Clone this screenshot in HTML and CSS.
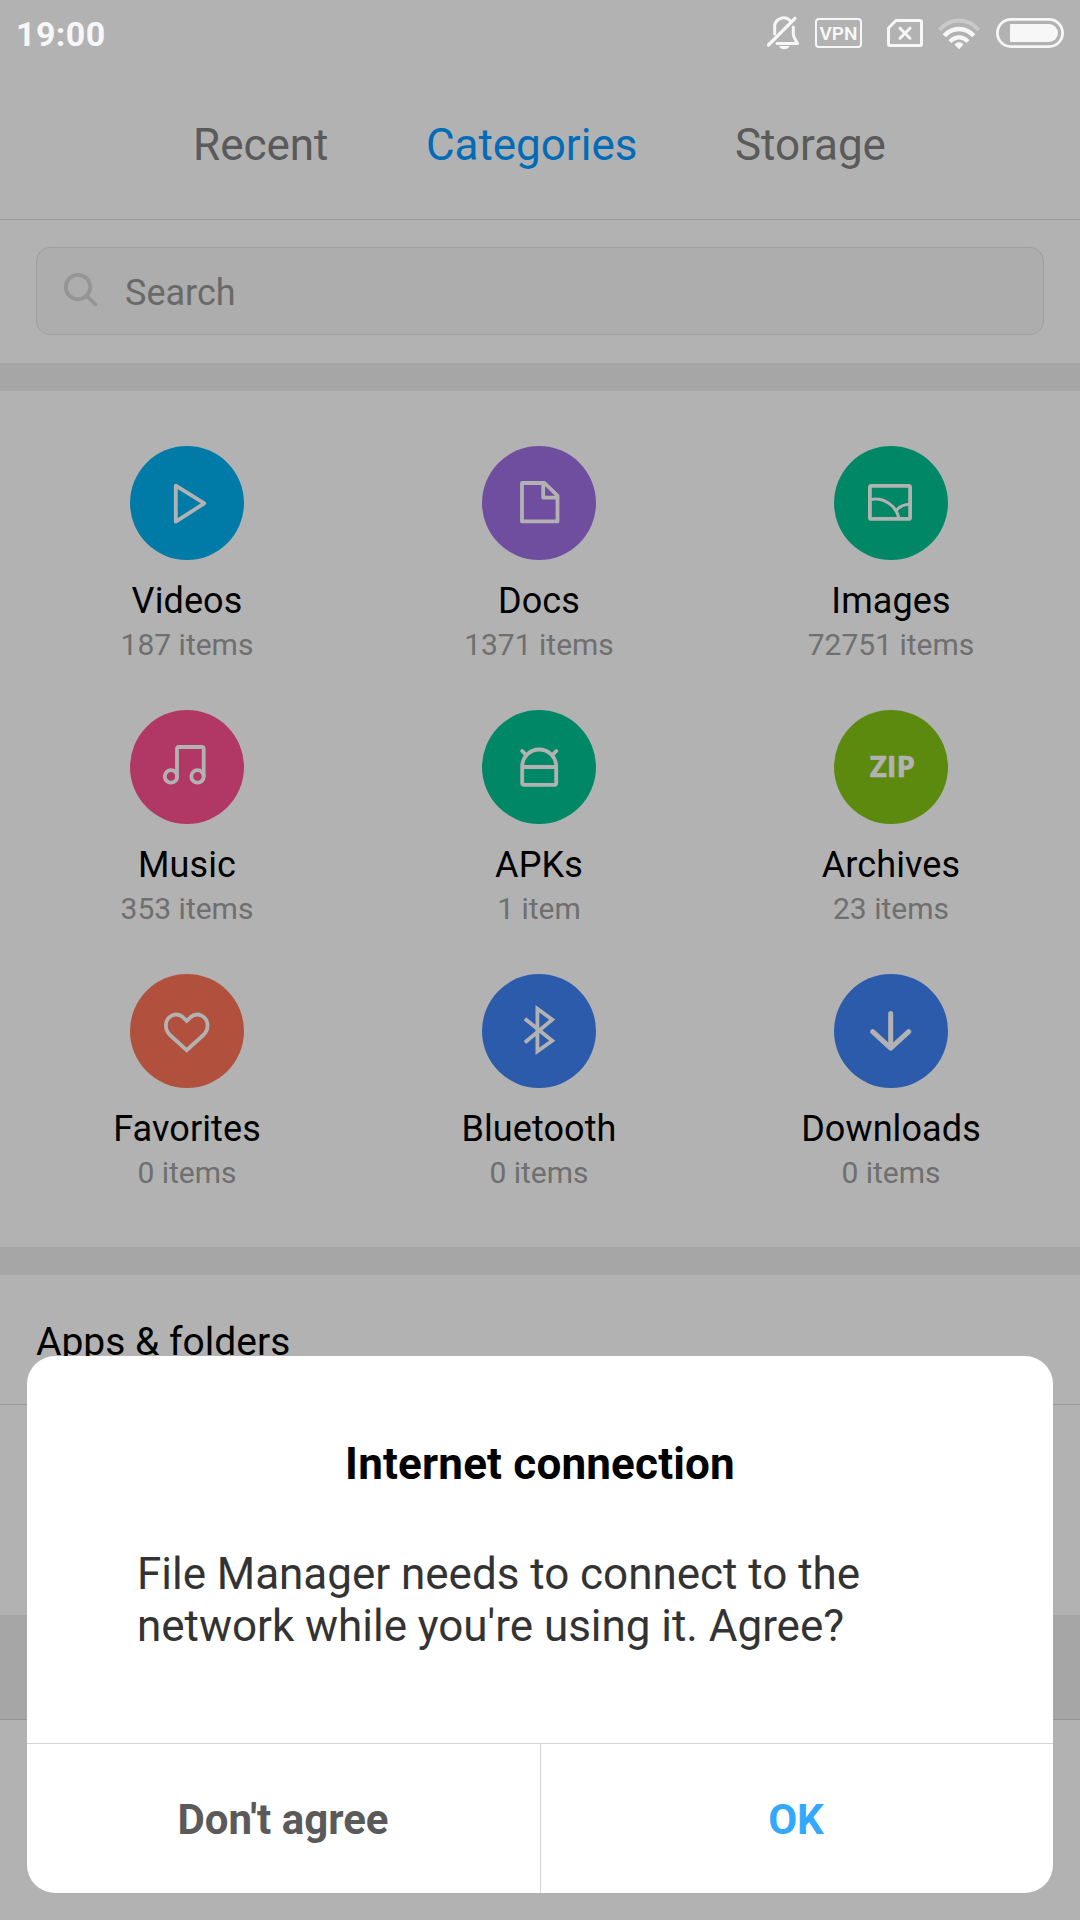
FILE: index.html
```html
<!DOCTYPE html>
<html lang="en">
<head>
<meta charset="utf-8">
<title>File Manager</title>
<link rel="stylesheet" href="styles.css">
</head>
<body>
<div class="screen">
  <header class="status-bar">
    <span class="clock">19:00</span>
    <div class="status-icons">
      <svg class="icon-bell" viewBox="766 16 35 34" width="35" height="34">
        <path d="M774.7 34V27.5A9 9 0 0 1 790.5 21M793.3 27V34Q793.5 37 795 39L797.5 43.4H777" stroke-width="3"/>
        <path d="M768.5 45L795 18.3" stroke-width="3.2"/>
        <path class="solid" d="M779 46H789.5Q788 49.2 784.3 49.2T779 46Z"/>
      </svg>
      <span class="vpn">VPN</span>
      <svg class="icon-sim" viewBox="886 18 38 30" width="38" height="30">
        <path d="M896 20.5H920Q921.5 20.5 921.5 22V44Q921.5 45.5 920 45.5H890Q888.5 45.5 888.5 44V28Z" stroke-width="3"/>
        <path d="M900 28.2L910 38.2M910 28.2L900 38.2" stroke-width="3"/>
      </svg>
      <svg class="icon-wifi" viewBox="937 17 44 33" width="44" height="33">
        <path class="faint" d="M939.3 30Q947.5 20.5 959 20.5T978.7 30" stroke-width="4"/>
        <path class="arc" d="M944.3 35.8Q950.3 29 959 29T973.7 35.8" stroke-width="4.4"/>
        <path class="arc" d="M950 41.6Q954 37.4 959 37.4T968 41.6" stroke-width="4.2"/>
        <path class="solid" d="M959 42.3Q963 42.3 963.2 45L959 49.2L954.8 45Q955 42.3 959 42.3Z"/>
      </svg>
      <svg class="icon-battery" viewBox="996 18 68 30" width="68" height="30">
        <rect x="997.4" y="19.4" width="65.2" height="27.2" rx="13.6" stroke-width="2.8"/>
        <path class="solid" d="M1011 24H1049A9 9 0 0 1 1049 42H1011Q1010 42 1010 41V25Q1010 24 1011 24Z"/>
      </svg>
    </div>
  </header>

  <nav class="tabs">
    <span class="tab">Recent</span>
    <span class="tab active">Categories</span>
    <span class="tab">Storage</span>
  </nav>

  <section class="search-area">
    <div class="search-box">
      <svg class="search-icon" viewBox="0 0 36 36" width="36" height="36">
        <circle cx="15" cy="15" r="12.2"/>
        <path d="M23.8 24L32.4 32.5"/>
      </svg>
      <span class="search-hint">Search</span>
    </div>
  </section>

  <main class="categories">
    <div class="category">
      <svg class="badge videos" viewBox="0 0 114 114"><path d="M45.8 39.7L74.3 57.3L45.8 75.6Z"/></svg>
      <span class="name">Videos</span><span class="count">187 items</span>
    </div>
    <div class="category">
      <svg class="badge docs" viewBox="0 0 114 114"><path d="M40 37H62.5L75.5 49.7V75.4H40ZM61.2 37V51.7H75.5"/></svg>
      <span class="name">Docs</span><span class="count">1371 items</span>
    </div>
    <div class="category">
      <svg class="badge images" viewBox="0 0 114 114"><rect x="35.9" y="39.9" width="40.2" height="33" rx="1.5"/><path class="thin" d="M37 53.4C50 51.5 62 59 65 72.5M62.7 64Q67.5 58.3 76 58.2"/></svg>
      <span class="name">Images</span><span class="count">72751 items</span>
    </div>
    <div class="category">
      <svg class="badge music" viewBox="0 0 114 114"><circle cx="41" cy="66.4" r="6.2"/><circle cx="67.5" cy="66.4" r="6.2"/><path d="M47 66.4V39Q47 37 49 37H71.7Q73.7 37 73.7 39V66.4"/></svg>
      <span class="name">Music</span><span class="count">353 items</span>
    </div>
    <div class="category">
      <svg class="badge apks" viewBox="0 0 114 114"><path d="M40.2 56.5A17 17 0 0 1 74.2 56.5V73Q74.2 74.8 72.4 74.8H42Q40.2 74.8 40.2 73ZM40.2 57H74.2M40.2 41L44 44.8M74.3 41L70.5 44.8"/></svg>
      <span class="name">APKs</span><span class="count">1 item</span>
    </div>
    <div class="category">
      <svg class="badge archives" viewBox="0 0 114 114"><text class="zip" x="35.7" y="67.3" textLength="45.4" lengthAdjust="spacingAndGlyphs">ZIP</text></svg>
      <span class="name">Archives</span><span class="count">23 items</span>
    </div>
    <div class="category">
      <svg class="badge favorites" viewBox="0 0 114 114"><path class="sharp" d="M56.7 46.8L53 43.3C46 37.3 35.9 42 35.9 51.8C35.9 56 37.5 58.6 40 61L56.7 76.2L73.4 61C75.9 58.6 77.5 56 77.5 51.8C77.5 42 67.4 37.3 60.4 43.3Z"/></svg>
      <span class="name">Favorites</span><span class="count">0 items</span>
    </div>
    <div class="category">
      <svg class="badge bluetooth" viewBox="0 0 114 114"><path class="sharp" d="M42.9 44.8L70.2 66.7L55.4 77.4V34.8L70.2 45.6L42.9 68.5"/></svg>
      <span class="name">Bluetooth</span><span class="count">0 items</span>
    </div>
    <div class="category">
      <svg class="badge downloads" viewBox="0 0 114 114"><path class="thick" d="M56.7 39.5V74M38.7 57.6L56.7 74.2L74.7 57.6"/></svg>
      <span class="name">Downloads</span><span class="count">0 items</span>
    </div>
  </main>

  <section class="apps">
    <h2 class="apps-title">Apps &amp; folders</h2>
    <div class="apps-body"></div>
  </section>
  <div class="footer-band"></div>

  <div class="dialog">
    <h1 class="dialog-title">Internet connection</h1>
    <p class="dialog-text">File Manager needs to connect to the network while you're using it. Agree?</p>
    <div class="dialog-actions">
      <span class="action decline">Don't agree</span>
      <span class="action accept">OK</span>
    </div>
  </div>
</div>
</body>
</html>
```
FILE: styles.css
```css
* { box-sizing: border-box; }

body {
  margin: 0;
  background: #b2b2b2;
  font-family: Roboto, "Liberation Sans", sans-serif;
}

.screen {
  position: relative;
  display: flex;
  flex-direction: column;
  width: 1080px;
  height: 1920px;
  overflow: hidden;
  background: #b2b2b2;
}

/* Status bar */
.status-bar {
  display: flex;
  justify-content: space-between;
  height: 70px;
  padding: 0 16px 0 16px;
}
.clock {
  font-size: 34px;
  line-height: 69px;
  font-weight: 700;
  letter-spacing: 0.4px;
  color: #f7f7f7;
}
.status-icons {
  display: flex;
  align-items: flex-start;
  padding-top: 16px;
}
.status-icons svg {
  display: block;
  fill: none;
  stroke: #f7f7f7;
  stroke-linecap: round;
  stroke-linejoin: round;
}
.status-icons .solid { fill: #f7f7f7; stroke: none; }
.status-icons .faint { stroke: #c9c9c9; stroke-linecap: butt; }
.status-icons .arc { stroke-linecap: butt; }
.vpn {
  width: 47px;
  height: 30px;
  margin: 2px 24px 0 14px;
  border: 2px solid #f7f7f7;
  border-radius: 4px;
  font-size: 19px;
  line-height: 27px;
  font-weight: 600;
  text-align: center;
  color: #f7f7f7;
}
.icon-sim { margin: 2px 13px 0 0; }
.icon-wifi { margin: 1px 15px 0 0; }
.icon-battery { margin-top: 2px; }

/* Tabs */
.tabs {
  display: flex;
  justify-content: center;
  gap: 97.5px;
  height: 150px;
  padding: 1px 1px 0 0;
  border-bottom: 1px solid #999;
}
.tab {
  font-size: 44px;
  line-height: 148px;
  letter-spacing: -0.03px;
  color: #5a5a5a;
}
.tab.active { color: #006cb8; }

/* Search */
.search-area {
  height: 171px;
  padding: 27px 36px 0;
  border-bottom: 28px solid #a6a6a6;
}
.search-box {
  display: flex;
  height: 88px;
  padding-left: 26px;
  border: 1px solid #9f9f9f;
  border-radius: 14px;
  background: #adadad;
}
.search-icon {
  margin-top: 24px;
  fill: none;
  stroke: #959595;
  stroke-width: 3.8;
  stroke-linecap: round;
}
.search-hint {
  margin-left: 26px;
  padding-top: 3px;
  font-size: 36px;
  line-height: 85px;
  color: #696969;
}

/* Category grid */
.categories {
  display: grid;
  grid-template-columns: repeat(3, 352px);
  grid-auto-rows: 264px;
  height: 884px;
  padding: 55px 13px 0 11px;
  border-bottom: 28px solid #a6a6a6;
}
.category {
  display: flex;
  flex-direction: column;
  align-items: center;
}
.badge {
  width: 114px;
  height: 114px;
  border-radius: 50%;
  fill: none;
  stroke: #b2b2b2;
  stroke-width: 3.8;
  stroke-linecap: round;
  stroke-linejoin: round;
}
.badge .thin { stroke-width: 3; stroke-linecap: butt; }
.badge .thick { stroke-width: 5; }
.badge .sharp { stroke-linecap: butt; stroke-linejoin: miter; }
.videos { background: #007aa6; }
.docs { background: #6f4e9f; }
.images, .apks { background: #008866; }
.music { background: #b13864; }
.archives { background: #5c8a0f; }
.favorites { background: #b1503c; }
.bluetooth, .downloads { background: #2c5bab; }
.zip {
  font-family: "Open Sans", sans-serif;
  font-size: 28.6px;
  font-weight: 700;
  fill: #b2b2b2;
  stroke-width: 0.6;
}
.name {
  margin-top: 19px;
  font-size: 36px;
  line-height: 44px;
  letter-spacing: 0.1px;
  color: #000;
}
.count {
  margin-top: 4px;
  font-size: 30px;
  line-height: 36px;
  color: #6f6f6f;
}

/* Apps section */
.apps-title {
  height: 130px;
  margin: 0;
  padding: 5px 36px 0;
  border-bottom: 1px solid #999;
  font-size: 39px;
  line-height: 125px;
  font-weight: 400;
  color: #000;
}
.apps-body { height: 210px; }
.footer-band {
  height: 105px;
  border-bottom: 1px solid #959595;
  background: #a6a6a6;
}

/* Dialog */
.dialog {
  position: absolute;
  left: 27px;
  bottom: 27px;
  display: flex;
  flex-direction: column;
  width: 1026px;
  height: 537px;
  padding-top: 82px;
  overflow: hidden;
  border-radius: 28px;
  background: #fff;
}
.dialog-title {
  margin: 0;
  font-size: 44px;
  line-height: 52px;
  font-weight: 700;
  letter-spacing: 0.18px;
  text-align: center;
  color: #000;
}
.dialog-text {
  margin: 58px 110px 0;
  font-size: 44px;
  line-height: 52px;
  letter-spacing: -0.03px;
  color: #333;
}
.dialog-actions {
  display: grid;
  grid-template-columns: 513px 513px;
  height: 150px;
  margin-top: auto;
  border-top: 1px solid #d4d4d4;
}
.action {
  padding: 3px 1px 0 0;
  font-size: 42px;
  line-height: 146px;
  font-weight: 700;
  text-align: center;
}
.decline { color: #5a5a5a; }
.accept { padding-right: 2px; border-left: 1px solid #d4d4d4; color: #33a8ff; }
```
